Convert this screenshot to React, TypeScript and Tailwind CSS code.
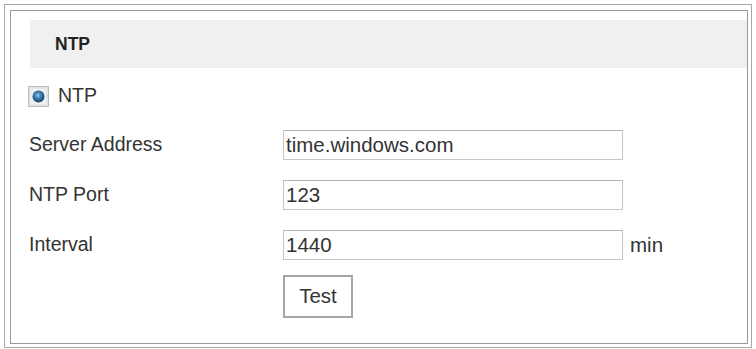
export default function App() {
  const label = "w-[254px] shrink-0 text-[19.5px] text-[#333]";
  const input =
    "w-[340px] h-[30px] border border-[#c6c6c6] border-t-[#b4b4b4] bg-white px-[2px] text-[20.5px] text-[#333] outline-none";

  return (
    <div className="w-[756px] h-[349px] bg-white font-['Liberation_Sans',Arial,sans-serif] pt-[4px] pl-[4px]">
      <div className="w-[748px] h-[344px] border border-[#a9a9a9] pl-[5px] pt-[5px] pr-[3px] pb-[3px] flex">
        <div className="flex-1 border border-[#999] flex flex-col">
          {/* Header */}
          <div className="mt-[9px] ml-[19px] h-[48px] bg-[#f0f0f0] flex items-center pl-[25px]">
            <span className="text-[17.5px] font-bold text-[#222]">NTP</span>
          </div>

          {/* Radio */}
          <div className="mt-[16px] h-[24px] ml-[17px] flex items-center gap-[9px]">
            <svg width="21" height="21" viewBox="0 0 21 21">
              <defs>
                <radialGradient id="rg" cx="0.45" cy="0.4" r="0.6">
                  <stop offset="0" stopColor="#8fc3e6" />
                  <stop offset="0.45" stopColor="#3f7fb3" />
                  <stop offset="1" stopColor="#173c5e" />
                </radialGradient>
              </defs>
              <rect x="0.5" y="0.5" width="20" height="20" fill="#dfe3e6" stroke="#8a8a8a" strokeDasharray="1 1" />
              <rect x="2.5" y="2.5" width="16" height="16" fill="#eef0f2" />
              <circle cx="10.5" cy="10.5" r="6" fill="url(#rg)" />
            </svg>
            <span className="text-[19.5px] text-[#333]">NTP</span>
          </div>

          {/* Fields */}
          <div className="mt-[22px] pl-[18px] flex flex-col gap-[20px]">
            <div className="flex items-center h-[30px]">
              <span className={label}>Server Address</span>
              <input className={input} defaultValue="time.windows.com" />
            </div>
            <div className="flex items-center h-[30px]">
              <span className={label}>NTP Port</span>
              <input className={input} defaultValue="123" />
            </div>
            <div className="flex items-center h-[30px]">
              <span className={label}>Interval</span>
              <input className={input} defaultValue="1440" />
              <span className="ml-[7px] text-[20.5px] text-[#333]">min</span>
            </div>
          </div>

          <div className="mt-[15px] pl-[272px]">
            <button className="w-[70px] h-[43px] border-2 border-[#a6a6a6] bg-white text-[20.5px] text-[#333]">
              Test
            </button>
          </div>
        </div>
      </div>
    </div>
  );
}
